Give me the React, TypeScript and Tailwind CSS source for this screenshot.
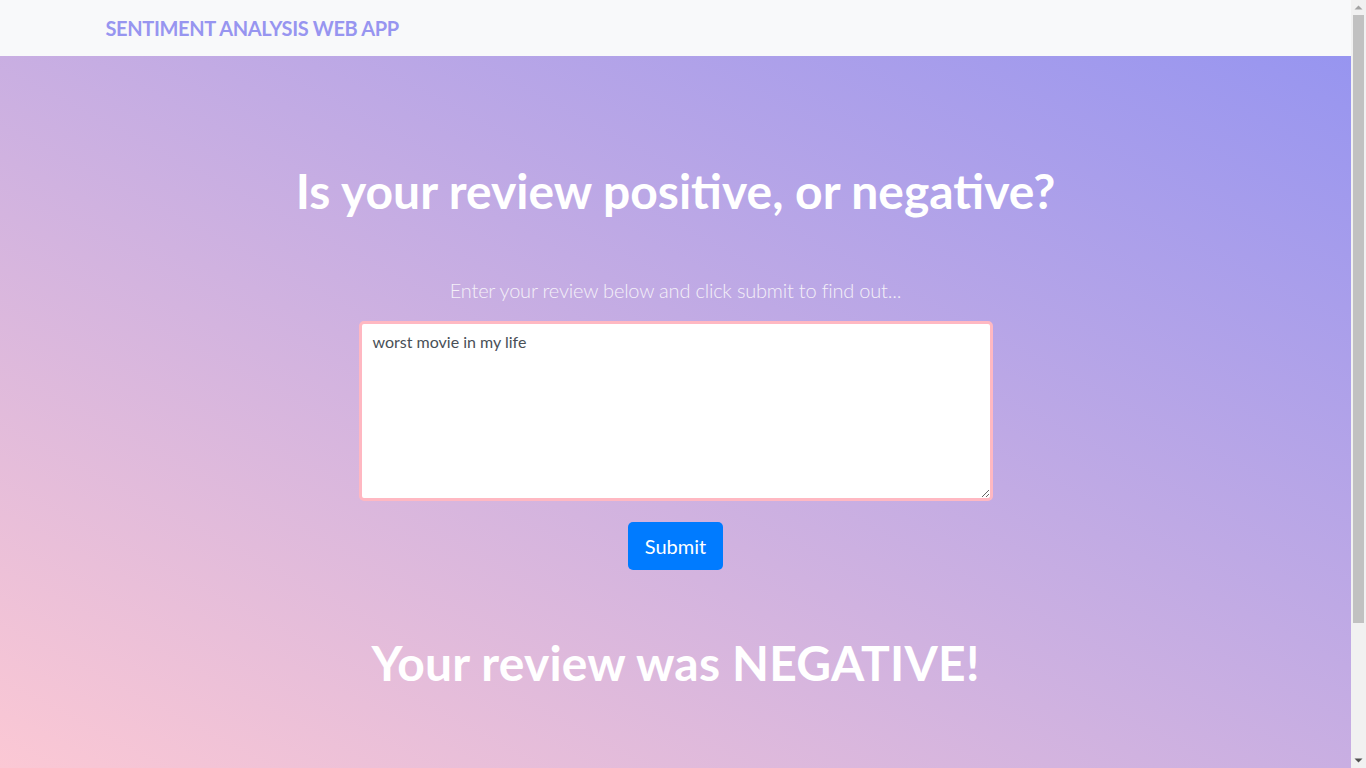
import React, { useState } from "react";

// window scrollbar as it shows in the screenshot
function Scrollbar() {
  return (
    <div className="w-[15px] h-screen bg-[#f1f1f1] flex flex-col items-center shrink-0">
      <svg width="15" height="15" viewBox="0 0 15 15" className="shrink-0">
        <path d="M3.5 9.5 L7.5 5.5 L11.5 9.5 Z" fill="#a3a3a3" />
      </svg>
      <div className="w-[11px] h-[608px] bg-[#c1c1c1]" />
      <div className="flex-1" />
      <svg width="15" height="15" viewBox="0 0 15 15" className="shrink-0">
        <path d="M3.5 5.5 L7.5 9.5 L11.5 5.5 Z" fill="#505050" />
      </svg>
    </div>
  );
}

export default function App() {
  const [review, setReview] = useState("worst movie in my life");

  return (
    <div className="h-screen overflow-hidden flex font-['Lato',sans-serif]">
      <div className="flex-1 min-w-0 flex flex-col">
        {/* top bar */}
        <nav className="h-14 bg-[#f8f9fa] flex items-center shrink-0">
          <div className="w-[1140px] mx-auto">
            <a href="#" className="text-[20px] font-bold text-[#9795f0] tracking-[-0.35px]">
              SENTIMENT ANALYSIS WEB APP
            </a>
          </div>
        </nav>

        <section className="flex-1 bg-[linear-gradient(to_top_right,#fbc8d4,#9795f0)] pt-[106px] flex flex-col items-center text-center">
          <h1 className="text-[48px] leading-[1.2] font-bold text-white">
            Is your review positive, or negative?
          </h1>
          <p className="mt-[55px] text-[20px] leading-[1.5] font-light text-[#f4f0f8] tracking-[-0.2px]">
            Enter your review below and click submit to find out...
          </p>
          <textarea
            value={review}
            onChange={(e) => setReview(e.target.value)}
            className="mt-4 w-[634px] h-[180px] bg-white border-[3px] border-[#ffb8c2] rounded-[5px] px-[11px] py-[6px] text-[16px] leading-[1.5] text-[#495057] outline-none"
          />
          <button className="mt-[21px] h-12 px-[17px] rounded-[5px] bg-[#007bff] text-white text-[20px]">
            Submit
          </button>
          <h2 className="mt-[64px] text-[48px] leading-[1.2] font-bold text-white tracking-[0.2px]">
            Your review was NEGATIVE!
          </h2>
        </section>
      </div>
      <Scrollbar />
    </div>
  );
}
